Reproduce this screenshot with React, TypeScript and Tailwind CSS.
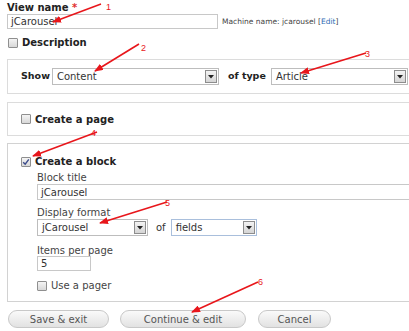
import React from "react";

function Box({ checked }: { checked?: boolean }) {
  return (
    <span className="relative flex h-[10px] w-[10px] shrink-0 items-center justify-center rounded-[1px] border border-[#8f8f8f] bg-gradient-to-b from-[#f4f4f4] to-[#d8d8d8]">
      {checked && (
        <svg width="8" height="8" viewBox="0 0 8 8" className="absolute">
          <path d="M1.2 4.2 L3.2 6.2 L6.8 1.4" fill="none" stroke="#3a4a8a" strokeWidth="1.4" />
        </svg>
      )}
    </span>
  );
}

function Select({ value, width, blue }: { value: string; width: string; blue?: boolean }) {
  return (
    <div
      className={`flex h-[17px] items-center justify-between border bg-white pl-[4px] pr-[1px] ${width} ${
        blue ? "border-[#a9bfdc]" : "border-[#bdbdbd]"
      }`}
    >
      <span className="text-[10px] leading-none text-[#333]">{value}</span>
      <span className="flex h-[13px] w-[12px] items-center justify-center border border-[#8d8d8d] bg-gradient-to-b from-[#f3f3f3] to-[#d5d5d5]">
        <svg width="6" height="4" viewBox="0 0 6 4">
          <path d="M0 0 H6 L3 3.5 Z" fill="#222" />
        </svg>
      </span>
    </div>
  );
}

function Btn({ label, width }: { label: string; width: string }) {
  return (
    <div
      className={`flex h-[18px] items-center justify-center rounded-full border border-[#c8c8c8] bg-gradient-to-b from-[#fafafa] to-[#e2e2e2] text-[10px] text-[#555] ${width}`}
    >
      {label}
    </div>
  );
}

export default function App() {
  return (
    <div className="relative h-[331px] w-[409px] overflow-hidden bg-white pl-[7px] pt-[2px] font-['DejaVu_Sans',sans-serif] text-[#333]">
      <div className="h-[12px] text-[10px] font-bold leading-[12px] text-[#222]">
        View name <span className="text-[#e03030]">*</span>
      </div>
      <div className="flex h-[15px] items-center">
        <div className="flex h-[15px] w-[211px] items-center border border-[#c8c8c8] pl-[3px] text-[10px]">
          jCarousel
        </div>
        <span className="ml-[4px] text-[7.5px] text-[#444]">
          Machine name: jcarousel [<span className="text-[#2a6ab3]">Edit</span>]
        </span>
      </div>
      <div className="mt-[8px] flex h-[11px] items-center gap-[4px] pl-[1px]">
        <Box />
        <span className="text-[10px] font-bold text-[#222]">Description</span>
      </div>

      <div className="mt-[11px] flex h-[35px] w-[420px] items-center border border-[#dcdcdc] pl-[13px]">
        <span className="text-[9.5px] font-bold text-[#222]">Show</span>
        <div className="ml-[2px]">
          <Select value="Content" width="w-[167px]" />
        </div>
        <span className="ml-[9px] text-[9.5px] font-bold text-[#222]">of type</span>
        <div className="ml-[5px]">
          <Select value="Article" width="w-[137px]" />
        </div>
      </div>

      <div className="mt-[8px] flex h-[34px] w-[420px] items-center gap-[4px] border border-[#dcdcdc] pl-[13px]">
        <Box />
        <span className="text-[10px] font-bold text-[#222]">Create a page</span>
      </div>

      <div className="mt-[7px] h-[159px] w-[420px] border border-[#d2d2d2] pl-[13px] pt-[12px]">
        <div className="flex h-[11px] items-center gap-[4px]">
          <Box checked />
          <span className="text-[10px] font-bold text-[#222]">Create a block</span>
        </div>
        <div className="pl-[16px]">
          <div className="mt-[5px] h-[12px] text-[10px] leading-[12px] text-[#444]">Block title</div>
          <div className="flex h-[16px] items-center border border-[#c8c8c8] pl-[3px] text-[10px]">jCarousel</div>
          <div className="mt-[7px] h-[12px] text-[10px] leading-[12px] text-[#444]">Display format</div>
          <div className="flex items-center">
            <Select value="jCarousel" width="w-[111px]" />
            <span className="ml-[8px] text-[10px] text-[#333]">of</span>
            <div className="ml-[5px]">
              <Select value="fields" width="w-[86px]" blue />
            </div>
          </div>
          <div className="mt-[9px] h-[11px] text-[10px] leading-[11px] text-[#444]">Items per page</div>
          <div className="flex h-[15px] w-[54px] items-center border border-[#c8c8c8] pl-[3px] text-[10px]">5</div>
          <div className="mt-[9px] flex h-[11px] items-center gap-[4px]">
            <Box />
            <span className="text-[10px] text-[#444]">Use a pager</span>
          </div>
        </div>
      </div>

      <div className="mt-[8px] flex items-center pl-[1px]">
        <Btn label="Save & exit" width="w-[101px]" />
        <div className="ml-[11px]">
          <Btn label="Continue & edit" width="w-[126px]" />
        </div>
        <div className="ml-[12px]">
          <Btn label="Cancel" width="w-[73px]" />
        </div>
      </div>

      <svg className="pointer-events-none absolute left-0 top-0" width="409" height="331" viewBox="0 0 409 331">
        <defs>
          <marker id="ah" markerWidth="9" markerHeight="7" refX="8" refY="3.5" orient="auto" markerUnits="userSpaceOnUse">
            <path d="M0 0 L9 3.5 L0 7 Z" fill="#e8161b" />
          </marker>
        </defs>
        <g stroke="#e8161b" strokeWidth="1.6" markerEnd="url(#ah)">
          <line x1="101" y1="4" x2="53" y2="22" />
          <line x1="139" y1="44" x2="95" y2="71" />
          <line x1="366" y1="53" x2="301" y2="73" />
          <line x1="97" y1="132" x2="33" y2="156" />
          <line x1="167" y1="202" x2="100" y2="223" />
          <line x1="258" y1="282" x2="192" y2="312" />
        </g>
        <g fill="#e8161b" fontSize="9" fontFamily="'Liberation Sans', sans-serif">
          <text x="106" y="10">1</text>
          <text x="141" y="51">2</text>
          <text x="365" y="57">3</text>
          <text x="91" y="136">4</text>
          <text x="165" y="206">5</text>
          <text x="258" y="285">6</text>
        </g>
      </svg>
    </div>
  );
}
